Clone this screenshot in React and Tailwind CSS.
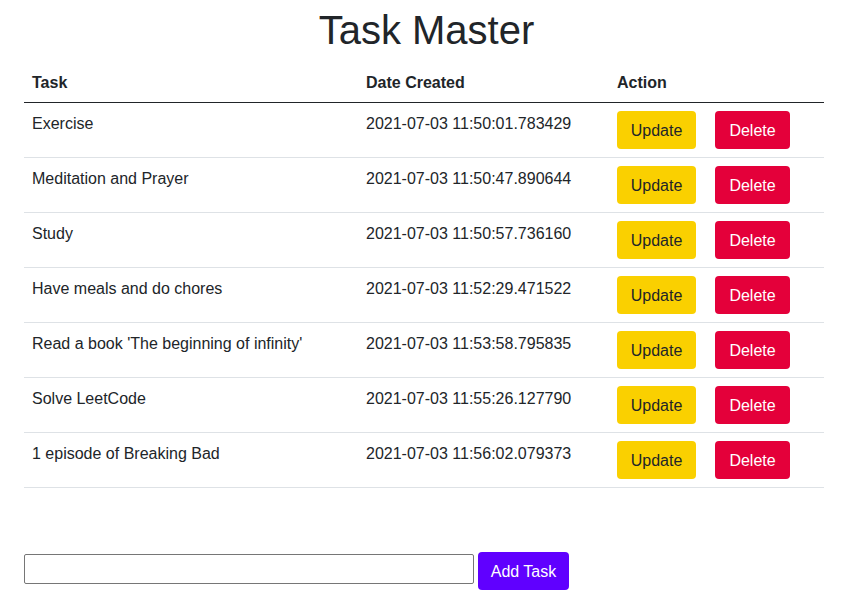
const tasks = [
  { content: "Exercise", date: "2021-07-03 11:50:01.783429" },
  { content: "Meditation and Prayer", date: "2021-07-03 11:50:47.890644" },
  { content: "Study", date: "2021-07-03 11:50:57.736160" },
  { content: "Have meals and do chores", date: "2021-07-03 11:52:29.471522" },
  { content: "Read a book 'The beginning of infinity'", date: "2021-07-03 11:53:58.795835" },
  { content: "Solve LeetCode", date: "2021-07-03 11:55:26.127790" },
  { content: "1 episode of Breaking Bad", date: "2021-07-03 11:56:02.079373" },
];

const App = () => {
  return (
    <div className="min-h-screen bg-white px-6 pt-[6px] text-[#212529] font-['Liberation_Sans',Arial,sans-serif]">
      {/* Title */}
      <h1 className="mb-2 text-center text-[40px] leading-[48px] font-medium">
        Task Master
      </h1>

      {/* Task table */}
      <table className="w-[800px] border-collapse text-base leading-6">
        <thead>
          <tr className="border-b-[1.5px] border-[#212529]">
            <th className="w-[334px] px-2 pt-[9px] pb-[7px] text-left font-bold">Task</th>
            <th className="w-[251px] px-2 pt-[9px] pb-[7px] text-left font-bold">Date Created</th>
            <th className="px-2 pt-[9px] pb-[7px] text-left font-bold">Action</th>
          </tr>
        </thead>
        <tbody>
          {tasks.map((task) => (
            <tr key={task.date} className="border-b border-[#dee2e6]">
              <td className="px-2 pt-[9px] pb-[7px] align-top">{task.content}</td>
              <td className="px-2 pt-[9px] pb-[7px] align-top">{task.date}</td>
              <td className="px-2 py-2 align-top">
                <div className="flex gap-[19px]">
                  <a
                    href="#"
                    className="flex h-[38px] w-[79px] items-center justify-center rounded-[4px] bg-[#fad000] pt-px text-[#212529]"
                  >
                    Update
                  </a>
                  <a
                    href="#"
                    className="flex h-[38px] w-[75px] items-center justify-center rounded-[4px] bg-[#e4003a] pt-px text-white"
                  >
                    Delete
                  </a>
                </div>
              </td>
            </tr>
          ))}
        </tbody>
      </table>

      {/* Add task form */}
      <form className="mt-16 flex items-start gap-1">
        <input
          type="text"
          className="mt-[2px] h-[30px] w-[450px] rounded-[2px] border border-[#767676] px-1"
        />
        <button
          type="submit"
          className="h-[38px] w-[91px] rounded-[4px] bg-[#6000ff] pt-px text-white"
        >
          Add Task
        </button>
      </form>
    </div>
  );
};

export default App;
